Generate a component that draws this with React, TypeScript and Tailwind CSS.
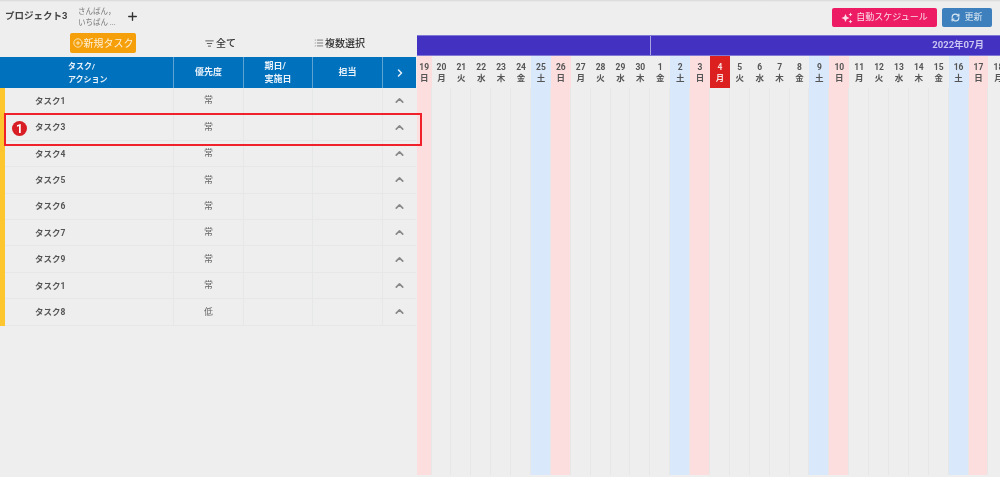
import React from 'react';
import { ChevronRight, ChevronUp, List, ListFilter, Plus, CirclePlus, RefreshCw } from 'lucide-react';

const tasks = [
  { name: 'タスク1', priority: '常' },
  { name: 'タスク3', priority: '常' },
  { name: 'タスク4', priority: '常' },
  { name: 'タスク5', priority: '常' },
  { name: 'タスク6', priority: '常' },
  { name: 'タスク7', priority: '常' },
  { name: 'タスク9', priority: '常' },
  { name: 'タスク1', priority: '常' },
  { name: 'タスク8', priority: '低' },
];

const weekdays = ['日', '月', '火', '水', '木', '金', '土'];

// 6/19 is a Sunday, the list just walks forward from there
const days: { label: string; wd: number }[] = [];
for (let i = 19; i <= 30; i++) days.push({ label: String(i), wd: (i - 19) % 7 });
for (let i = 1; i <= 18; i++) days.push({ label: String(i), wd: (i + 4) % 7 });

const Sparkle = () => (
  <svg width="12" height="12" viewBox="0 0 24 24" fill="currentColor">
    <path d="M19 9l1.25-2.75L23 5l-2.75-1.25L19 1l-1.25 2.75L15 5l2.75 1.25L19 9zm-7.5.5L9 4 6.5 9.5 1 12l5.5 2.5L9 20l2.5-5.5L17 12l-5.5-2.5zM19 15l-1.25 2.75L15 19l2.75 1.25L19 23l1.25-2.75L23 19l-2.75-1.25L19 15z" />
  </svg>
);

const App: React.FC = () => {
  return (
    <div
      className="relative flex h-[477px] w-[1000px] flex-col overflow-hidden bg-[#eeeeee] text-[#444] blur-[0.4px]"
      style={{ fontFamily: 'Roboto, "Noto Sans CJK JP", sans-serif' }}
    >
      <div className="h-[2px] shrink-0 bg-gradient-to-b from-[#d8d8d8] to-[#eeeeee]"></div>
      <div className="flex min-h-0 flex-1">
        {/* left: task table */}
        <div className="flex w-[417px] shrink-0 flex-col">
          <div className="flex h-[29px] shrink-0 items-center pl-[5px]">
            <span className="w-[73px] text-[9.5px] font-bold text-[#444]">プロジェクト3</span>
            <div className="w-[48px] text-[7.5px] leading-[11px] text-[#777]">
              <div>さんぱん，</div>
              <div>いちばん ...</div>
            </div>
            <Plus className="h-[13px] w-[13px] text-[#333]" strokeWidth={2.5} />
          </div>
          <div className="flex h-[26px] shrink-0 items-center pb-[2px]">
            <div className="ml-[70px] flex h-[20px] w-[66px] items-center justify-center gap-[1px] rounded-[2px] bg-[#f59f0a] text-[10px] text-[#fdf0d8]">
              <CirclePlus className="h-[10px] w-[10px]" />
              新規タスク
            </div>
            <div className="ml-[69px] flex items-center gap-[2px] text-[10px] font-medium text-[#333]">
              <ListFilter className="h-[9px] w-[9px]" />
              全て
            </div>
            <div className="ml-[78px] flex items-center gap-[1px] text-[10px] font-medium text-[#333]">
              <List className="h-[10px] w-[10px] text-[#666]" />
              複数選択
            </div>
          </div>
          <div className="flex h-[31px] w-[416px] shrink-0 bg-[#0071bc] text-[9px] font-bold leading-[13px] text-[#e8f2fa]">
            <div className="flex w-[174px] items-center border-r border-[#5fa3d3] pl-[68px] text-[8px]">
              <div>
                タスク/
                <br />
                アクション
              </div>
            </div>
            <div className="flex w-[70px] items-center justify-center border-r border-[#5fa3d3]">優先度</div>
            <div className="flex w-[69px] items-center justify-center border-r border-[#5fa3d3]">
              <div>
                期日/
                <br />
                実施日
              </div>
            </div>
            <div className="flex w-[70px] items-center justify-center border-r border-[#5fa3d3]">担当</div>
            <div className="flex flex-1 items-center justify-center">
              <ChevronRight className="h-[12px] w-[12px]" strokeWidth={3} />
            </div>
          </div>
          {tasks.map((task, i) => (
            <div key={i} className="flex h-[26.4px] w-[416px] shrink-0 text-[8.5px]">
              <div className="w-[5px] bg-[#fdc62e]"></div>
              <div className="flex w-[169px] items-center border-b border-r border-[#e6e8e8] pl-[30px] pt-[1px] font-bold text-[#555]">
                {task.name}
              </div>
              <div className="flex w-[70px] items-center justify-center border-b border-r border-[#e6e8e8] pt-[1px] text-[9px] text-[#666]">
                {task.priority}
              </div>
              <div className="w-[69px] border-b border-r border-[#e6e8e8]"></div>
              <div className="w-[70px] border-b border-r border-[#e6e8e8]"></div>
              <div className="flex flex-1 items-center justify-center border-b border-[#e6e8e8] text-[#888]">
                <ChevronUp className="h-[13px] w-[13px]" strokeWidth={3} />
              </div>
            </div>
          ))}
        </div>

        {/* right: gantt */}
        <div className="flex min-w-0 flex-1 flex-col">
          <div className="flex h-[33px] shrink-0 items-center justify-end gap-[5px] pb-[2px] pr-[8px]">
            <div className="flex h-[19px] w-[105px] items-center justify-center gap-[3px] rounded-[2px] bg-[#ec1b63] text-[9px] text-[#fbdce7]">
              <Sparkle />
              自動スケジュール
            </div>
            <div className="flex h-[19px] w-[50px] items-center justify-center gap-[4px] rounded-[2px] bg-[#3e80bd] text-[9px] text-[#dfeaf4]">
              <RefreshCw className="h-[9px] w-[9px]" strokeWidth={3} />
              更新
            </div>
          </div>
          <div className="flex h-[21px] shrink-0 border-y border-[#7f78d4] bg-[#4331c1]">
            <div className="w-[233.5px] border-r border-[#a9a3e4]"></div>
            <div className="flex flex-1 items-center justify-end pr-[16px] text-[9.5px] font-bold text-[#c9c4f2]">
              2022年07月
            </div>
          </div>
          <div className="flex min-h-0 flex-1 pb-[2px]">
            {days.map((d, i) => {
              const bg = d.wd === 0 ? 'bg-[#fddede]' : d.wd === 6 ? 'bg-[#d9e8fb]' : '';
              const today = d.label === '4';
              return (
                <div
                  key={i}
                  className={`flex shrink-0 flex-col items-center ${i === 0 ? 'w-[14.5px]' : 'w-[19.9px]'} ${bg}`}
                >
                  <div
                    className={`flex h-[32px] w-full shrink-0 flex-col items-center justify-center pt-[1px] text-[8.5px] font-bold leading-[10.5px] ${
                      today ? 'bg-[#dc2020] text-[#fbdcdc]' : 'text-[#555]'
                    }`}
                  >
                    <span>{d.label}</span>
                    <span>{weekdays[d.wd]}</span>
                  </div>
                  <div className="w-full flex-1 border-r border-[#e7e7e7]"></div>
                </div>
              );
            })}
          </div>
        </div>
      </div>

      {/* annotation over row 2 */}
      <div className="absolute left-[4px] top-[113px] h-[33px] w-[418px] border-2 border-[#f0212b]"></div>
      <div className="absolute left-[12px] top-[121px] flex h-[15px] w-[15px] items-center justify-center rounded-full bg-[#d81e24] text-[12px] font-bold text-white">
        1
      </div>
    </div>
  );
};

export default App;
